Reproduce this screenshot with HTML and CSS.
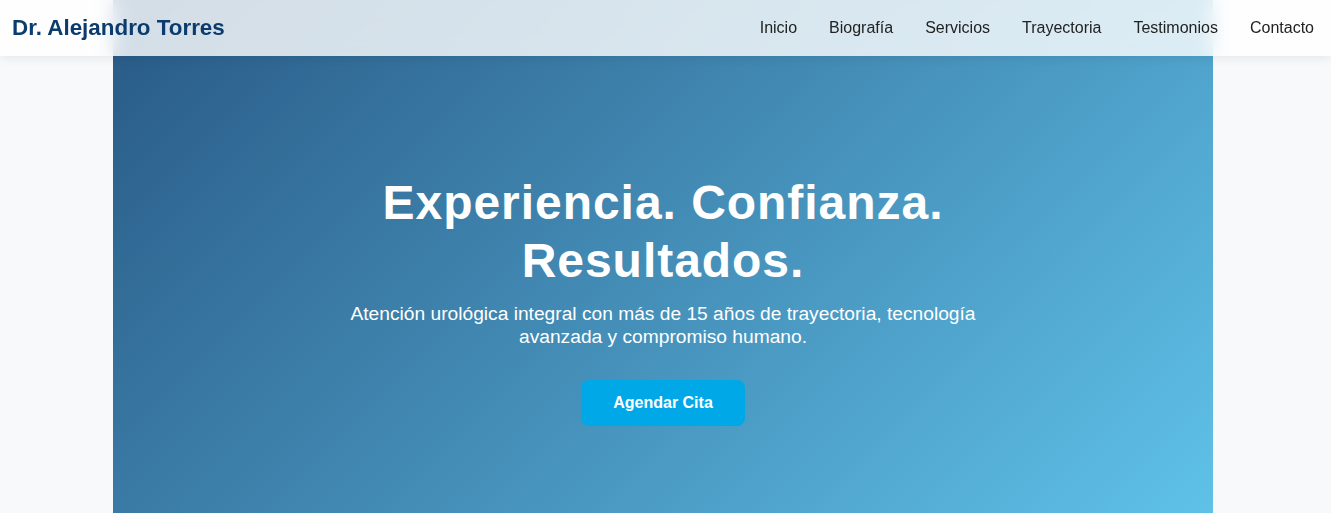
FILE: index.html
```html
<!DOCTYPE html>
<html lang="es">
<head>
<meta charset="utf-8">
<title>Dr. Alejandro Torres</title>
<link rel="stylesheet" href="styles.css">
</head>
<body>
<header class="site-header">
  <a class="logo" href="#">Dr. Alejandro Torres</a>
  <nav class="main-nav">
    <a href="#">Inicio</a>
    <a href="#">Biografía</a>
    <a href="#">Servicios</a>
    <a href="#">Trayectoria</a>
    <a href="#">Testimonios</a>
    <a href="#">Contacto</a>
  </nav>
</header>
<main class="page">
  <section class="hero">
    <div class="hero-content">
      <h1 class="hero-title">Experiencia. Confianza. Resultados.</h1>
      <p class="hero-text">Atención urológica integral con más de 15 años de trayectoria, tecnología avanzada y compromiso humano.</p>
      <a class="btn-primary" href="#">Agendar Cita</a>
    </div>
  </section>
</main>
</body>
</html>
```
FILE: styles.css
```css
* { box-sizing: border-box; }

html, body {
  margin: 0;
  padding: 0;
}

body {
  background: #f8f9fb;
  font-family: "Liberation Sans", Arial, Helvetica, sans-serif;
  color: #222;
}

a { text-decoration: none; }

.site-header {
  position: fixed;
  top: 0;
  left: 0;
  right: 0;
  height: 56px;
  z-index: 10;
  display: flex;
  align-items: center;
  justify-content: space-between;
  padding: 0 17px 0 12px;
  background: rgba(255, 255, 255, 0.8);
  backdrop-filter: blur(10px);
  -webkit-backdrop-filter: blur(10px);
  box-shadow: 0 2px 10px rgba(0, 0, 0, 0.08);
}

.logo {
  font-size: 22.4px;
  font-weight: 700;
  color: #0b3c6d;
}

.main-nav {
  display: flex;
  gap: 32px;
}

.main-nav a {
  font-size: 16px;
  color: #222;
}

.page {
  padding-right: 5px;
}

.hero {
  max-width: 1100px;
  height: 600px;
  margin: 0 auto;
  display: flex;
  align-items: center;
  justify-content: center;
  background: linear-gradient(135deg, #285985 0%, #62c7ee 100%);
  color: #fff;
  text-align: center;
}

.hero-content {
  display: flex;
  flex-direction: column;
  align-items: center;
}

.hero-title {
  margin: 0 0 12px;
  font-size: 48px;
  line-height: 1.2;
  letter-spacing: 0.02em;
  font-weight: 700;
  max-width: 640px;
}

.hero-text {
  margin: 0 0 32px;
  font-size: 19.2px;
  line-height: 1.2;
  max-width: 680px;
}

.btn-primary {
  display: inline-block;
  background: #00a8e8;
  color: #fff;
  font-weight: 700;
  font-size: 16px;
  line-height: 18px;
  padding: 14px 32px;
  border-radius: 8px;
}
```
